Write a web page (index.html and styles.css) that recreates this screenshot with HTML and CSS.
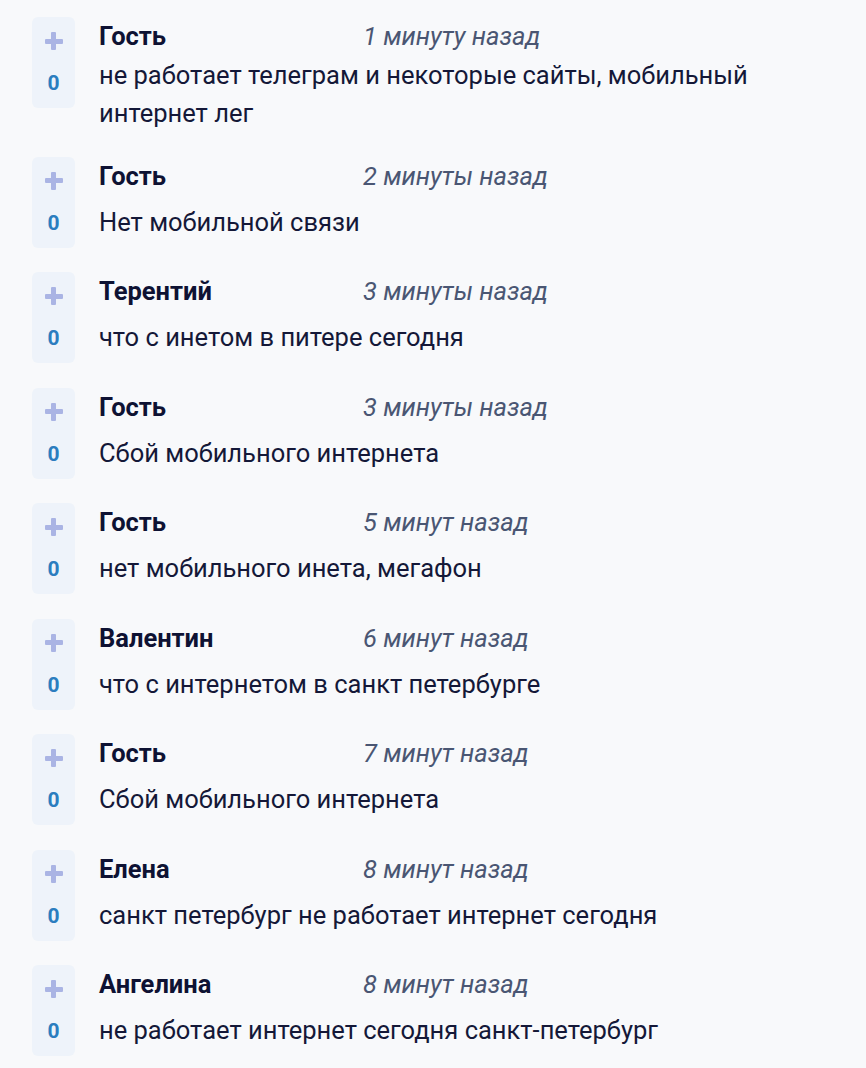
FILE: index.html
```html
<!DOCTYPE html>
<html lang="ru">
<head>
<meta charset="utf-8">
<link rel="stylesheet" href="styles.css">
</head>
<body>
<ul class="comments">
  <li class="comment">
    <div class="vote"><span class="plus"></span><span class="count">0</span></div>
    <div class="body">
      <div class="head"><span class="name">Гость</span><span class="time">1 минуту назад</span></div>
      <div class="text"><p>не работает телеграм и некоторые сайты, мобильный интернет лег</p></div>
    </div>
  </li>
  <li class="comment">
    <div class="vote"><span class="plus"></span><span class="count">0</span></div>
    <div class="body">
      <div class="head"><span class="name">Гость</span><span class="time">2 минуты назад</span></div>
      <div class="text"><p>Нет мобильной связи</p></div>
    </div>
  </li>
  <li class="comment">
    <div class="vote"><span class="plus"></span><span class="count">0</span></div>
    <div class="body">
      <div class="head"><span class="name">Терентий</span><span class="time">3 минуты назад</span></div>
      <div class="text"><p>что с инетом в питере сегодня</p></div>
    </div>
  </li>
  <li class="comment">
    <div class="vote"><span class="plus"></span><span class="count">0</span></div>
    <div class="body">
      <div class="head"><span class="name">Гость</span><span class="time">3 минуты назад</span></div>
      <div class="text"><p>Сбой мобильного интернета</p></div>
    </div>
  </li>
  <li class="comment">
    <div class="vote"><span class="plus"></span><span class="count">0</span></div>
    <div class="body">
      <div class="head"><span class="name">Гость</span><span class="time">5 минут назад</span></div>
      <div class="text"><p>нет мобильного инета, мегафон</p></div>
    </div>
  </li>
  <li class="comment">
    <div class="vote"><span class="plus"></span><span class="count">0</span></div>
    <div class="body">
      <div class="head"><span class="name">Валентин</span><span class="time">6 минут назад</span></div>
      <div class="text"><p>что с интернетом в санкт петербурге</p></div>
    </div>
  </li>
  <li class="comment">
    <div class="vote"><span class="plus"></span><span class="count">0</span></div>
    <div class="body">
      <div class="head"><span class="name">Гость</span><span class="time">7 минут назад</span></div>
      <div class="text"><p>Сбой мобильного интернета</p></div>
    </div>
  </li>
  <li class="comment">
    <div class="vote"><span class="plus"></span><span class="count">0</span></div>
    <div class="body">
      <div class="head"><span class="name">Елена</span><span class="time">8 минут назад</span></div>
      <div class="text"><p>санкт петербург не работает интернет сегодня</p></div>
    </div>
  </li>
  <li class="comment">
    <div class="vote"><span class="plus"></span><span class="count">0</span></div>
    <div class="body">
      <div class="head"><span class="name">Ангелина</span><span class="time">8 минут назад</span></div>
      <div class="text"><p>не работает интернет сегодня санкт-петербург</p></div>
    </div>
  </li>
</ul>
</body>
</html>
```

FILE: styles.css
```css
html, body {
  margin: 0;
  padding: 0;
  background: #f8f9fb;
}
body {
  font-family: Roboto, "Noto Sans", Arial, sans-serif;
  color: #141838;
}
.comments {
  list-style: none;
  margin: 0;
  padding: 17px 0 0 32px;
  display: flex;
  flex-direction: column;
  gap: 24.5px;
}
.comment {
  display: flex;
  align-items: flex-start;
}
.vote {
  width: 43px;
  height: 91px;
  flex: none;
  background: #eef3fa;
  border-radius: 6px;
  display: flex;
  flex-direction: column;
  align-items: center;
}
.plus {
  position: relative;
  display: block;
  width: 18px;
  height: 18px;
  margin-top: 15px;
}
.plus::before,
.plus::after {
  content: "";
  position: absolute;
  background: #aab4e4;
  border-radius: 1px;
}
.plus::before {
  left: 0;
  right: 0;
  top: 6.5px;
  height: 5px;
}
.plus::after {
  top: 0;
  bottom: 0;
  left: 6.5px;
  width: 5px;
}
.count {
  margin-top: 21px;
  font-size: 21px;
  font-weight: 700;
  line-height: 24px;
  color: #2b7dbf;
}
.body {
  margin-left: 24px;
  min-height: 91px;
  display: flex;
  flex-direction: column;
  flex: 1;
  padding-right: 20px;
}
.head {
  display: flex;
  align-items: baseline;
  height: 37px;
  line-height: 38px;
  font-size: 25.5px;
}
.name {
  width: 264px;
  flex: none;
  font-weight: 700;
  color: #0e1233;
}
.time {
  font-style: italic;
  color: #4a5673;
}
.text {
  flex: 1;
  display: flex;
  align-items: center;
  padding-top: 2px;
}
.text p {
  margin: 0;
  font-size: 25.5px;
  line-height: 38px;
  color: #141838;
}
```
